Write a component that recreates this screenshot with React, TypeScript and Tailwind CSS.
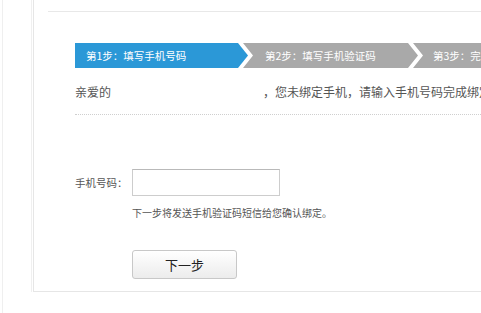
import React from "react";

const font = { fontFamily: '"Noto Sans CJK SC", "Liberation Sans", sans-serif' };

export default function App() {
  return (
    <div className="w-[481px] h-[313px] bg-white overflow-hidden" style={font}>
      <div className="ml-[2px] h-full border-l border-[#efefef] pl-[28px]">
        <div className="h-[292px] border-l border-[#f0f0f0] pl-[1px]">
          <div className="h-full border-l border-b border-[#e6e6e6] overflow-hidden">
            <div className="ml-[14px] mt-[11px] border-t border-[#e8e8e8]" />
            <div className="ml-[41px] mt-[31px] flex h-[25px] w-[600px] text-[10.5px] text-white whitespace-nowrap">
              <div className="w-[173px] shrink-0 bg-[#2b98d7] pl-[11px] flex items-center [clip-path:polygon(0_0,calc(100%-10px)_0,100%_50%,calc(100%-10px)_100%,0_100%)]">
                第1步：填写手机号码
              </div>
              <div className="-ml-[5px] w-[175px] shrink-0 bg-[#a9a9a9] pl-[22px] flex items-center [clip-path:polygon(0_0,calc(100%-10px)_0,100%_50%,calc(100%-10px)_100%,0_100%,10px_50%)]">
                第2步：填写手机验证码
              </div>
              <div className="-ml-[5px] w-[175px] shrink-0 bg-[#a9a9a9] pl-[20px] flex items-center [clip-path:polygon(0_0,calc(100%-10px)_0,100%_50%,calc(100%-10px)_100%,0_100%,10px_50%)]">
                第3步：完成绑定
              </div>
            </div>
            <div className="ml-[41px] mt-[15px] flex h-[17px] w-[600px] items-center text-[12px] text-[#555] whitespace-nowrap">
              <span className="w-[188px] shrink-0">亲爱的</span>
              <span className="shrink-0">，您未绑定手机，请输入手机号码完成绑定。</span>
            </div>
            <div className="ml-[41px] mt-[14px] border-t border-dotted border-[#cfcfcf]" />
            <div className="ml-[41px] mt-[54px] flex items-center">
              <span className="w-[57px] shrink-0 text-[10.5px] text-[#555]">手机号码：</span>
              <div className="w-[148px] h-[27px] border border-[#cdcdcd] border-t-[#b9b9b9] bg-white" />
            </div>
            <div className="ml-[98px] mt-[9px] h-[15px] flex items-center text-[10px] text-[#555] whitespace-nowrap">
              下一步将发送手机验证码短信给您确认绑定。
            </div>
            <div className="ml-[98px] mt-[30px]">
              <button className="w-[105px] h-[29px] rounded-[3px] border border-[#c8c8c8] bg-gradient-to-b from-white to-[#ececec] text-[13px] text-[#222] flex items-center justify-center" style={font}>
                下一步
              </button>
            </div>
          </div>
        </div>
      </div>
    </div>
  );
}
